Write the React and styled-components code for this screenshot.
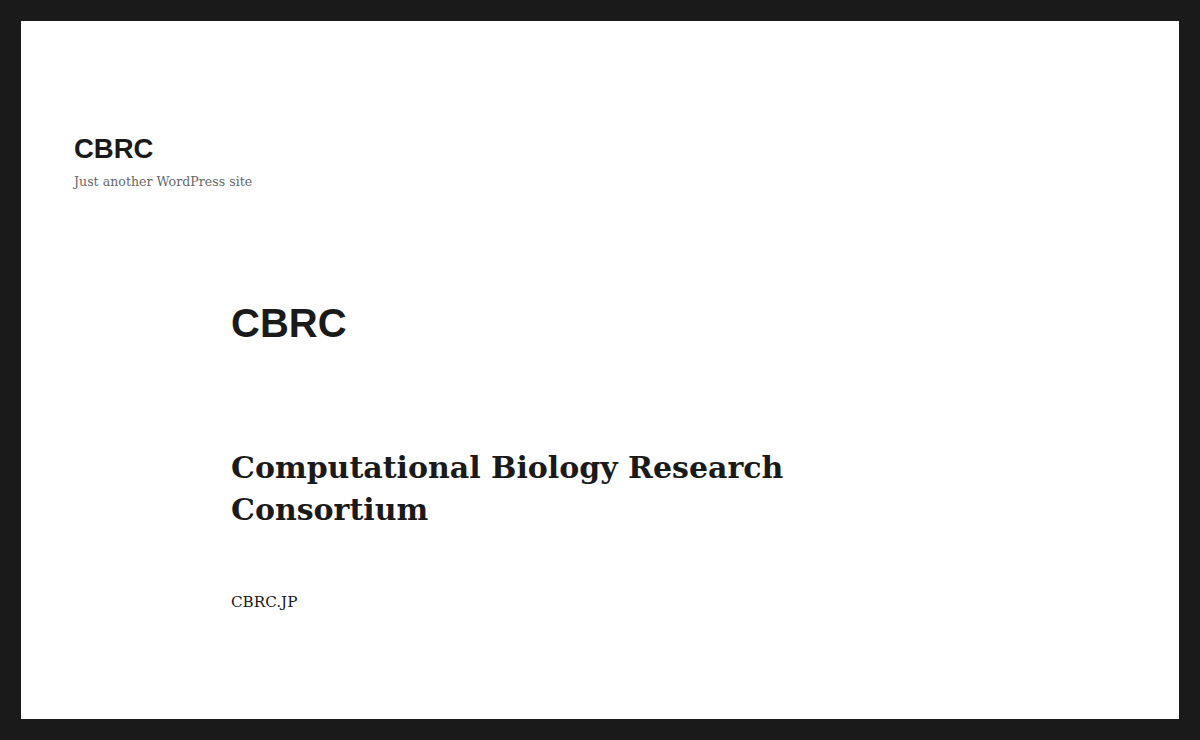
import React from "react";
import styled, { createGlobalStyle } from "styled-components";

const GlobalStyle = createGlobalStyle`
  html, body {
    margin: 0;
    padding: 0;
    background: #1a1a1a;
  }
  body {
    font-family: "DejaVu Serif", "Liberation Serif", serif;
    color: #1a1a1a;
  }
`;

const Frame = styled.div`
  padding: 21px;
  height: 740px;
  box-sizing: border-box;
`;

const Site = styled.div`
  background: #fff;
  height: 100%;
  padding: 0 53px;
  box-sizing: border-box;
`;

const Header = styled.header`
  padding-top: 111px;
`;

const SiteTitle = styled.p`
  margin: 0;
  font-family: "Liberation Sans", Arial, sans-serif;
  font-weight: 700;
  font-size: 27.5px;
  line-height: 1.25;
`;

const Tagline = styled.p`
  margin: 6px 0 0;
  font-size: 12.6px;
  line-height: 1.6;
  color: #686868;
`;

const Main = styled.main`
  padding: 106px 0 0 157px;
  max-width: 600px;
`;

const EntryTitle = styled.h1`
  margin: 0;
  font-family: "Liberation Sans", Arial, sans-serif;
  font-weight: 700;
  font-size: 40px;
  line-height: 1.225;
`;

const Heading = styled.h2`
  margin: 99px 0 0;
  font-weight: 700;
  font-size: 30px;
  line-height: 1.4;
`;

const Para = styled.p`
  margin: 58px 0 0;
  font-size: 15.2px;
  line-height: 1.75;
`;

export default function App() {
  return (
    <>
      <GlobalStyle />
      <Frame>
        <Site>
          <Header>
            <SiteTitle>CBRC</SiteTitle>
            <Tagline>Just another WordPress site</Tagline>
          </Header>
          <Main>
            <EntryTitle>CBRC</EntryTitle>
            <Heading>Computational Biology Research Consortium</Heading>
            <Para>CBRC.JP</Para>
          </Main>
        </Site>
      </Frame>
    </>
  );
}
